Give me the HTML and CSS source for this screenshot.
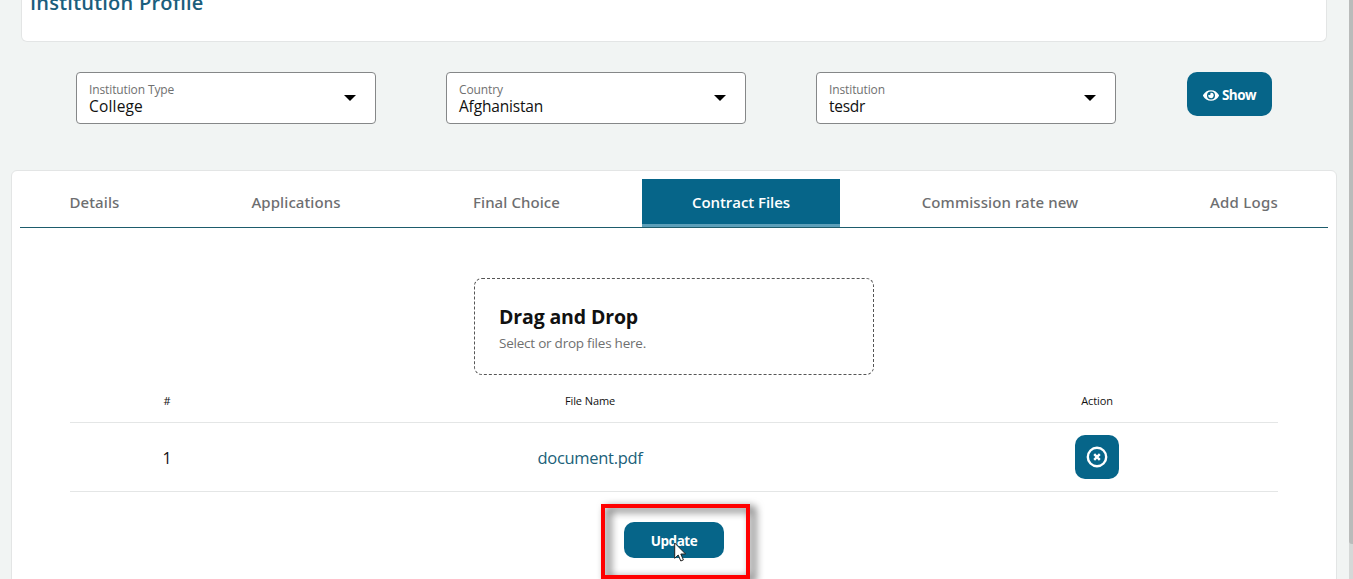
FILE: index.html
```html
<!DOCTYPE html>
<html lang="en">
<head>
<meta charset="utf-8">
<title>Institution Profile</title>
<link rel="stylesheet" href="styles.css">
</head>
<body>
<div class="page">
  <header class="profile-card"><h1 class="profile-title">Institution Profile</h1></header>

  <form class="filters">
    <div class="select">
      <div class="select-text"><span class="select-label">Institution Type</span><span class="select-value college">College</span></div>
      <svg class="caret" viewBox="0 0 12 6"><path d="M0 0h12L6 6z"/></svg>
    </div>
    <div class="select">
      <div class="select-text"><span class="select-label">Country</span><span class="select-value">Afghanistan</span></div>
      <svg class="caret" viewBox="0 0 12 6"><path d="M0 0h12L6 6z"/></svg>
    </div>
    <div class="select">
      <div class="select-text"><span class="select-label">Institution</span><span class="select-value short">tesdr</span></div>
      <svg class="caret" viewBox="0 0 12 6"><path d="M0 0h12L6 6z"/></svg>
    </div>
    <button type="button" class="button show">
      <svg class="eye" viewBox="0 0 576 512"><path d="M572.5 241.400C518.300 135.600 410.900 64 288 64S57.700 135.600 3.500 241.400a32.400 32.400 0 0 0 0 29.200C57.700 376.400 165.100 448 288 448s230.300-71.600 284.500-177.400a32.400 32.400 0 0 0 0-29.200zM288 400a144 144 0 1 1 144-144 143.900 143.900 0 0 1-144 144zm0-240a95.300 95.300 0 0 0-25.300 3.800 47.900 47.900 0 0 1-66.900 66.900A95.800 95.800 0 1 0 288 160z"/></svg>
      <span>Show</span>
    </button>
  </form>

  <main class="panel">
    <nav class="tabs">
      <a class="tab">Details</a>
      <a class="tab">Applications</a>
      <a class="tab">Final Choice</a>
      <a class="tab active">Contract Files</a>
      <a class="tab">Commission rate new</a>
      <a class="tab logs">Add Logs</a>
    </nav>

    <section class="dropzone">
      <h2 class="drop-title">Drag and Drop</h2>
      <p class="drop-hint">Select or drop files here.</p>
    </section>

    <div class="files">
      <div class="row head"><span>#</span><span>File Name</span><span>Action</span></div>
      <div class="row">
        <span class="index">1</span>
        <a class="file">document.pdf</a>
        <button type="button" class="button remove">
          <svg class="cross" viewBox="0 0 22 22"><circle cx="11" cy="11" r="9.200"/><path d="M8.200 8.200l5.600 5.600M13.800 8.200l-5.600 5.600"/></svg>
        </button>
      </div>
    </div>

    <div class="submit">
      <button type="button" class="button update">Update</button>
      <div class="highlight"></div>
      <svg class="cursor" viewBox="0 0 12 20"><path d="M.7 1v15.300l3.500-3.300 2.600 6 2.600-1.100-2.600-5.900h4.800z"/></svg>
    </div>
  </main>
  <div class="scroll-track"><div class="scroll-thumb"></div></div>
</div>
</body>
</html>
```
FILE: styles.css
```css
* { box-sizing: border-box; }

body {
  margin: 0;
  overflow: hidden;
  font-family: "Open Sans", "Noto Sans", sans-serif;
  color: #111;
}

h1, h2, p { margin: 0; }

.page {
  position: relative;
  display: flow-root;
  height: 579px;
  overflow: hidden;
  background: #f1f4f3;
}

.profile-card {
  display: flow-root;
  width: 1306px;
  height: 42px;
  margin-left: 21px;
  padding-left: 8px;
  background: #fff;
  border: 1px solid #e3e5e5;
  border-top: 0;
  border-radius: 0 0 6px 6px;
}

.profile-title {
  margin-top: -10px;
  font-size: 20px;
  line-height: 26px;
  font-weight: 600;
  letter-spacing: .22px;
  color: #1b5e7d;
}

.filters {
  display: flex;
  align-items: flex-start;
  gap: 70px;
  padding: 30px 0 0 76px;
}

.select {
  display: flex;
  justify-content: space-between;
  align-items: center;
  width: 300px;
  height: 52px;
  padding: 0 19px 0 12px;
  background: #fff;
  border: 1px solid #858788;
  border-radius: 4px;
}

.select-text { display: flex; flex-direction: column; }

.select-label {
  font-size: 12px;
  line-height: 16px;
  letter-spacing: -.12px;
  color: #6f7070;
}

.select-value {
  font-size: 15.5px;
  line-height: 16px;
  letter-spacing: -.18px;
}

.select-value.college { letter-spacing: .18px; }
.select-value.short { letter-spacing: -.3px; }

.caret { width: 12px; height: 6px; }

.button {
  display: flex;
  align-items: center;
  justify-content: center;
  padding: 0;
  border: 0;
  border-radius: 10px;
  background: #066589;
  color: #fff;
  font-family: inherit;
  font-size: 13.5px;
  font-weight: 700;
  letter-spacing: -.5px;
}

.show {
  width: 85px;
  height: 44px;
  gap: 3px;
  margin-left: 1px;
  padding-top: 2px;
}

.eye { width: 16px; height: 15px; fill: #fff; }

.panel {
  width: 1326px;
  height: 430px;
  margin: 46px 0 0 11px;
  padding: 8px 8px 0;
  background: #fff;
  border: 1px solid #e3e5e5;
  border-radius: 6px;
}

.tabs {
  display: grid;
  grid-template-columns: 149px 190px 187px 198px 256px 168px;
  grid-template-rows: 48px;
  justify-content: space-between;
  height: 49px;
  border-bottom: 1px solid #1d5c6c;
}

.tab {
  font-family: "Noto Sans", "Open Sans", sans-serif;
  font-size: 15px;
  line-height: 47px;
  font-weight: 500;
  letter-spacing: .08px;
  text-align: center;
  color: #6d6e70;
}

.tab.active {
  background: #066589;
  border-bottom: 3px solid #5c9fb9;
  font-family: "Open Sans", "Noto Sans", sans-serif;
  font-weight: 600;
  letter-spacing: -.06px;
  color: #fff;
}

.tab.logs { letter-spacing: .24px; }

.dropzone {
  width: 400px;
  height: 97px;
  margin: 50px auto 0;
  padding: 24px 24px;
  border: 1px dashed #555;
  border-radius: 8px;
}

.drop-title {
  font-size: 19.5px;
  line-height: 27px;
  font-weight: 700;
  letter-spacing: -.14px;
}

.drop-hint {
  font-size: 13.5px;
  line-height: 26px;
  letter-spacing: -.23px;
  color: #6f7070;
}

.files { margin: 0 50px; }

.row {
  display: grid;
  grid-template-columns: 194px 652px 362px;
  place-items: center;
  height: 69px;
  border-bottom: 1px solid #e4e6e6;
}

.row.head {
  height: 48px;
  padding-top: 4px;
  font-size: 11px;
  letter-spacing: -.1px;
}

.index { padding-top: 2px; font-size: 16px; }
.file { font-size: 16.5px; letter-spacing: -.3px; color: #205f79; }

.remove { width: 44px; height: 44px; }

.cross {
  width: 22px;
  height: 22px;
  fill: none;
  stroke: #fff;
  stroke-width: 2.400;
}

.submit {
  position: relative;
  width: 148px;
  height: 75px;
  margin: 12px auto 0;
  padding-top: 18px;
}

.update { width: 100px; height: 36px; margin: 0 auto; padding-top: 2px; }

/* Callout frame over the button */
.highlight {
  position: absolute;
  inset: 0 -2px 0 1px;
  border: 4px solid #f00;
  filter: drop-shadow(5px 3px 4px rgba(0, 0, 0, .75));
}

.cursor {
  position: absolute;
  left: 74px;
  top: 38px;
  width: 12px;
  height: 20px;
  fill: #fff;
  stroke: #222;
}

.scroll-track {
  position: absolute;
  top: 0;
  right: 0;
  width: 4px;
  height: 579px;
  background: #d5d8d7;
}

.scroll-thumb { height: 544px; background: #b9bbba; border-radius: 0 0 0 3px; }
```
